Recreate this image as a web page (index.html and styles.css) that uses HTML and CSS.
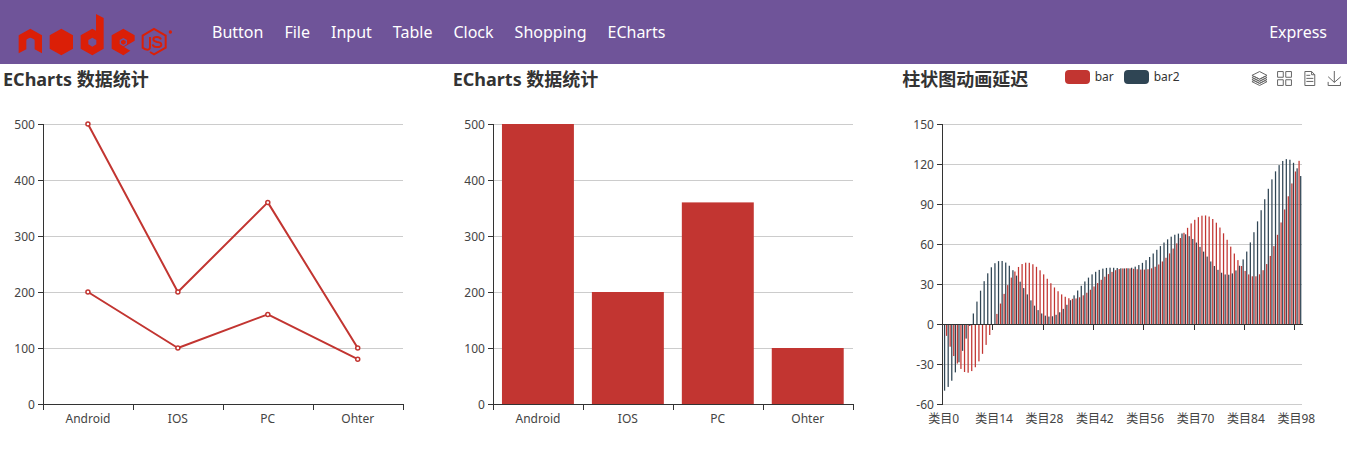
FILE: index.html
```html
<!DOCTYPE html>
<html lang="zh">
<head>
<meta charset="utf-8">
<title>ECharts</title>
<link rel="stylesheet" href="styles.css">
</head>
<body>
<header class="navbar">
  <a class="brand" href="#" aria-label="Node.js home">
    <svg class="logo" viewBox="0 0 465 126" aria-hidden="true">
      <g class="logo-solid">
        <path d="M37 44L72 64V118L50 106V80Q50 76 46 75L40 72Q37 70 34 72L28 75Q25 76 25 80V106L2 118V64Z"/>
        <path d="M130 44L165 64V104L130 124L95 104V64Z"/>
        <path fill-rule="evenodd" d="M223 44L234 50V0L257 12V104L223 124L188 104V64ZM223 71L211 78V91L223 98L235 91V78Z"/>
        <path d="M316 44L350 64V80L318 99L337 110L316 124L281 104V64Z"/>
      </g>
      <path class="logo-hole" d="M316 72L327 78V90L319 95L316 97L305 90V78Z"/>
      <path class="logo-core" d="M316 77L323 81V88L316 92L309 88V81Z"/>
      <g class="logo-line">
        <path d="M396 114L408 121L443 101V65L408 45L374 65V101L382 106Q396 110 396 99V69"/>
        <path d="M429 76Q426 69 417 69Q406 69 406 76Q406 82 417 84Q430 85 430 92Q430 99 417 99Q405 99 404 91"/>
      </g>
      <circle class="logo-core" cx="457" cy="54" r="5"/>
    </svg>
  </a>
  <nav class="links" aria-label="Main">
    <a href="#">Button</a>
    <a href="#">File</a>
    <a href="#">Input</a>
    <a href="#">Table</a>
    <a href="#">Clock</a>
    <a href="#">Shopping</a>
    <a href="#">ECharts</a>
  </nav>
  <a class="account" href="#">Express</a>
</header>

<main class="charts">
  <section class="chart">
    <div class="chart-head"><h2>ECharts 数据统计</h2></div>
    <svg class="plot" data-chart="line" role="img" aria-label="Line chart"></svg>
  </section>
  <section class="chart">
    <div class="chart-head"><h2>ECharts 数据统计</h2></div>
    <svg class="plot" data-chart="bar" role="img" aria-label="Bar chart"></svg>
  </section>
  <section class="chart">
    <div class="chart-head">
      <h2>柱状图动画延迟</h2>
      <div class="legend">
        <button type="button"><span class="swatch swatch-red"></span>bar</button>
        <button type="button"><span class="swatch swatch-navy"></span>bar2</button>
      </div>
      <div class="toolbox">
        <button type="button" aria-label="Stack"><svg viewBox="0 0 60 60"><path d="M8.2,38.4l-8.4,4.1l30.6,15.3L60,42.5l-8.1-4.1l-21.5,11L8.2,38.4z M51.9,30l-8.1,4.2l-13.4,6.9l-13.9-6.9L8.2,30l-8.4,4.2l8.4,4.2l22.2,11l21.5-11l8.1-4.2L51.9,30z M51.9,21.7l-8.1,4.2L35.7,30l-5.3,2.8L24.9,30l-8.4-4.1l-8.3-4.2l-8.4,4.2L8.2,30l8.3,4.2l13.9,6.9l13.4-6.9l8.1-4.2l8.1-4.1L51.9,21.7z M30.4,2.2L-0.2,17.5l8.4,4.1l8.3,4.2l8.4,4.2l5.5,2.7l5.3-2.7l8.1-4.2l8.1-4.2l8.1-4.1L30.4,2.2z"/></svg></button>
        <button type="button" aria-label="Tile"><svg viewBox="0 0 60 60"><path d="M2.3,2.2h22.8V25H2.3V2.2z M35,2.2h22.8V25H35V2.2z M2.3,35h22.8v22.8H2.3V35z M35,35h22.8v22.8H35V35z"/></svg></button>
        <button type="button" aria-label="Data view"><svg viewBox="0 0 60 60"><path d="M17.5,17.3H33 M45.4,29.5h-28 M11.5,2v56H51V14.8L38.4,2H11.5z M38.4,2.2v12.7H51 M45.4,41.7h-28"/></svg></button>
        <button type="button" aria-label="Save as image"><svg viewBox="0 0 60 60"><path d="M4.7,22.9L29.3,45.5L54.7,23.4 M4.6,43.6L4.6,58L53.8,58L53.8,43.6 M29.2,45.1L29.2,0"/></svg></button>
      </div>
    </div>
    <svg class="plot" data-chart="wave" role="img" aria-label="Bar chart with two series"></svg>
  </section>
</main>
<script src="charts.js"></script>
</body>
</html>
```
FILE: styles.css
```css
* { box-sizing: border-box; }

body {
  margin: 0;
  overflow-x: hidden;
  background: #fff;
  color: #333;
  font-family: "Noto Sans", "Noto Sans CJK SC", sans-serif;
}

a { color: inherit; text-decoration: none; }

button {
  padding: 0;
  border: 0;
  background: none;
  color: inherit;
  font: inherit;
  cursor: pointer;
}

.navbar {
  display: flex;
  align-items: center;
  height: 64px;
  padding: 0 20px 0 18px;
  background: #6f5499;
  color: #fff;
  font-size: 16px;
}

.brand { display: flex; margin-right: 39px; padding-top: 6px; }
.logo { width: 155px; height: 42px; }
.logo-solid, .logo-core { fill: #db1f07; }
.logo-hole { fill: #6f5499; }
.logo-line { fill: none; stroke: #db1f07; stroke-width: 6; }

.links { display: flex; flex: 1; gap: 21px; }

.charts {
  display: grid;
  grid-template-columns: repeat(3, 1fr);
  margin-left: -2px;
}

.chart { min-width: 0; }

.chart-head {
  display: grid;
  grid-template-columns: 1fr auto 1fr;
  align-items: start;
  height: 50px;
  padding: 5px;
}

.chart-head h2 {
  margin: 0;
  font-size: 18px;
  line-height: 20px;
  white-space: nowrap;
}

.legend { display: flex; gap: 10px; font-size: 12px; line-height: 16px; }
.legend button { display: flex; align-items: center; gap: 5px; }
.swatch { width: 25px; height: 14px; border-radius: 4px; }
.swatch-red { background: #c23531; }
.swatch-navy { background: #2f4554; }

.toolbox { display: flex; justify-content: flex-end; gap: 10px; padding: 2px 0 0; }
.toolbox button { display: flex; }
.toolbox svg { width: 15px; height: 15px; overflow: visible; }
.toolbox path { fill: none; stroke: #666; stroke-width: 4; }

.plot { display: block; width: 100%; height: 345px; overflow: visible; }
.plot text { fill: #444; font-size: 12px; }
.plot .tick-y { text-anchor: end; }
.plot .tick-x { text-anchor: middle; }
.plot .axis { stroke: #333; shape-rendering: crispEdges; }
.plot .split { stroke: #ccc; shape-rendering: crispEdges; }
.plot .red { fill: #c23531; }
.plot .navy { fill: #2f4554; }
.plot .series { fill: none; stroke: #c23531; stroke-width: 2; stroke-linejoin: bevel; }
.plot .point { fill: #fff; stroke: #c23531; stroke-width: 1.5; }
```
FILE: charts.js
```js
const platforms = ['Android', 'IOS', 'PC', 'Ohter'];
const waveLabels = [];
const sine = [];
const cosine = [];
for (let i = 0; i < 100; i++) {
  waveLabels.push('类目' + i);
  sine.push((Math.sin(i / 5) * (i / 5 - 10) + i / 6) * 5);
  cosine.push((Math.cos(i / 5) * (i / 5 - 10) + i / 6) * 5);
}

const charts = {
  line: { min: 0, max: 500, step: 100, labels: platforms, every: 1,
    lines: [[500, 200, 360, 100], [200, 100, 160, 80]] },
  bar: { min: 0, max: 500, step: 100, labels: platforms, every: 1,
    bars: [{ name: 'red', data: [500, 200, 360, 100] }] },
  wave: { min: -60, max: 150, step: 30, labels: waveLabels, every: 14,
    bars: [{ name: 'red', data: sine }, { name: 'navy', data: cosine }] }
};

function draw(svg) {
  const chart = charts[svg.dataset.chart];
  const width = svg.getBoundingClientRect().width;
  const left = width * 0.1;
  const right = width * 0.9;
  const top = 10;
  const bottom = 290;
  const band = (right - left) / chart.labels.length;
  const y = v => bottom - (v - chart.min) / (chart.max - chart.min) * (bottom - top);
  const line = (name, x1, y1, x2, y2) =>
    `<line class="${name}" x1="${x1}" y1="${y1}" x2="${x2}" y2="${y2}"/>`;
  const zero = y(0) + 0.5;
  let out = '';

  for (let v = chart.min; v <= chart.max; v += chart.step) {
    const at = y(v) + 0.5;
    out += line('split', left, at, right, at);
    out += `<text class="tick-y" x="${left - 8}" y="${at + 4}">${v}</text>`;
  }

  const bars = chart.bars || [];
  const barWidth = band * 0.8 / (bars.length + (bars.length - 1) * 0.3);
  bars.forEach((series, s) => {
    series.data.forEach((v, i) => {
      const x = left + band * (i + 0.1) + s * barWidth * 1.3;
      out += `<rect class="${series.name}" x="${x}" y="${Math.min(y(v), y(0))}" width="${barWidth}" height="${Math.abs(y(v) - y(0))}"/>`;
    });
  });

  for (let v = chart.min; v <= chart.max; v += chart.step) {
    out += line('axis', left - 5, y(v) + 0.5, left, y(v) + 0.5);
  }
  out += line('axis', left + 0.5, top, left + 0.5, bottom + 1);
  out += line('axis', left, zero, right + 1, zero);

  chart.labels.forEach((label, i) => {
    if (i % chart.every) return;
    out += line('axis', left + band * i + 0.5, zero, left + band * i + 0.5, zero + 5);
    out += `<text class="tick-x" x="${left + band * (i + 0.5)}" y="${bottom + 19}">${label}</text>`;
  });
  if (chart.every === 1) out += line('axis', right + 0.5, zero, right + 0.5, zero + 5);

  (chart.lines || []).forEach(data => {
    const points = data.map((v, i) => [left + band * (i + 0.5), y(v)]);
    out += `<polyline class="series" points="${points.join(' ')}"/>`;
    points.forEach(p => { out += `<circle class="point" cx="${p[0]}" cy="${p[1]}" r="2"/>`; });
  });

  svg.innerHTML = out;
}

function drawAll() {
  document.querySelectorAll('.plot').forEach(draw);
}

drawAll();
window.addEventListener('resize', drawAll);
```
